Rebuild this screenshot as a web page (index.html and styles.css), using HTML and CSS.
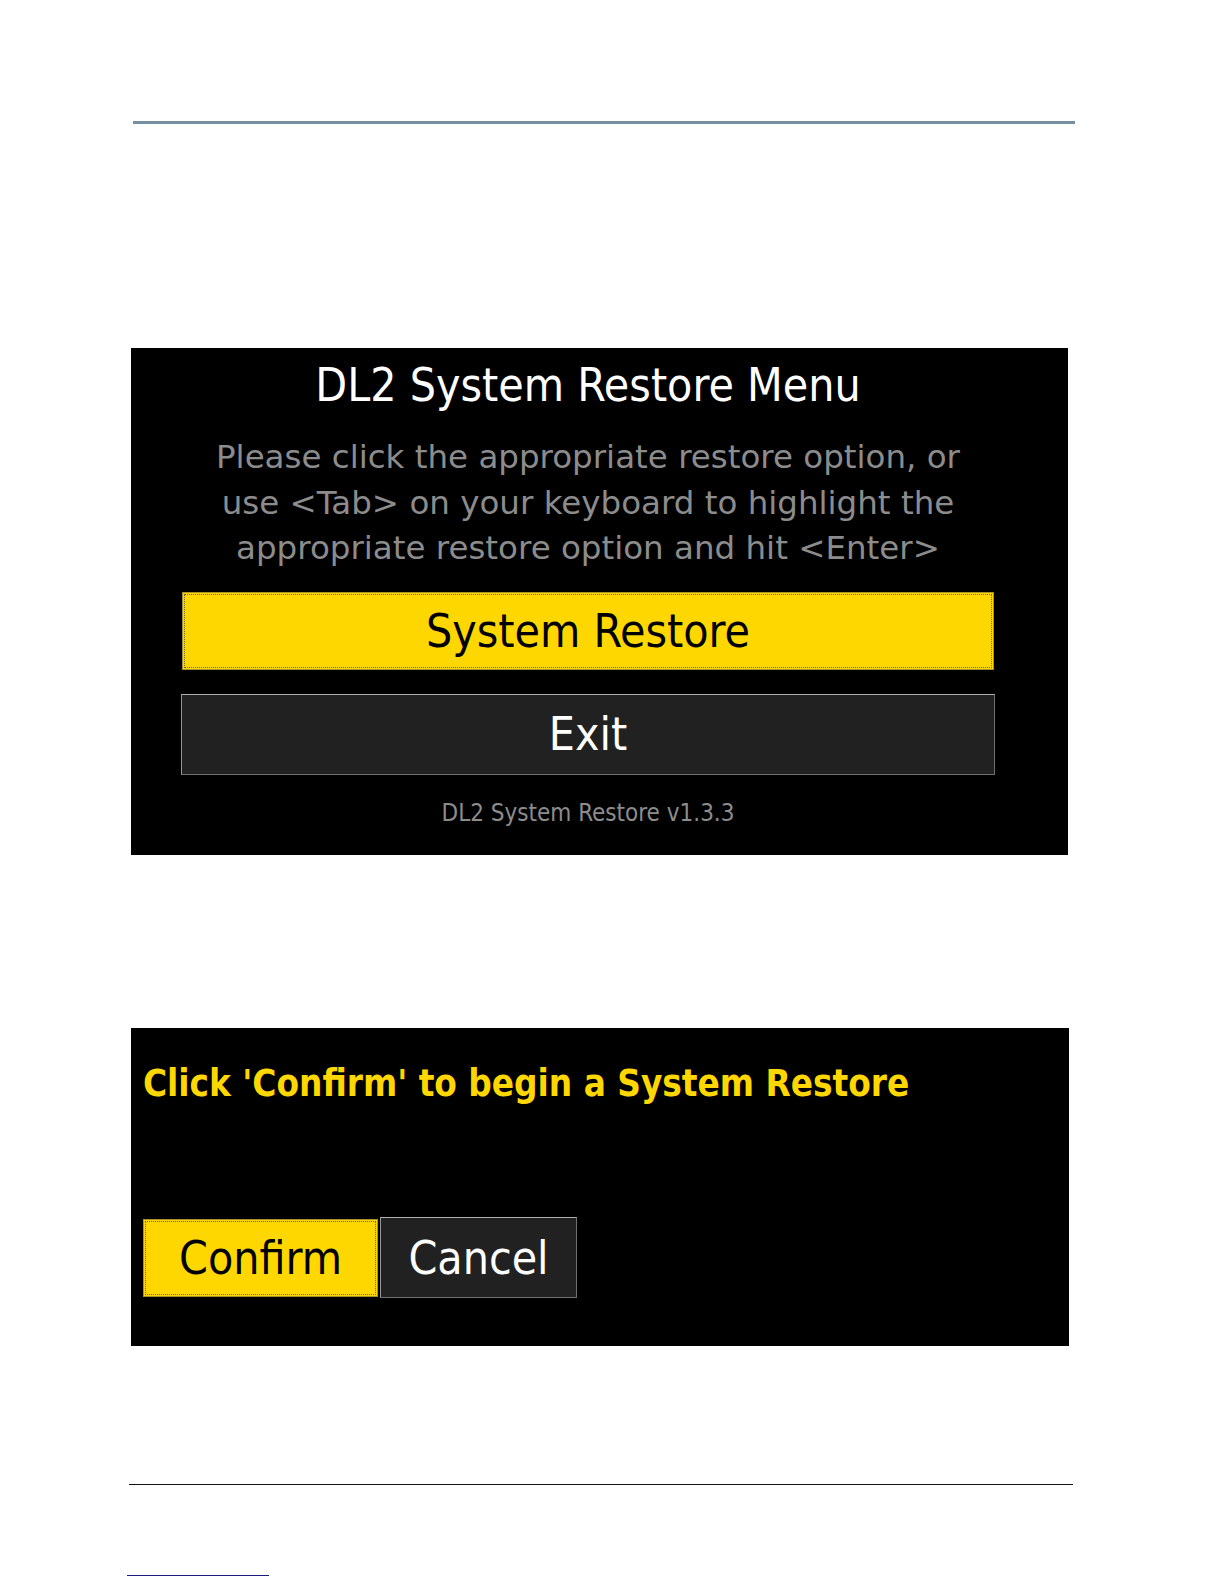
FILE: index.html
```html
<!DOCTYPE html>
<html lang="en">

<head>
    <meta charset="UTF-8">
    <meta name="viewport" content="width=device-width, initial-scale=1.0">
    <title>DL2 System Restore</title>
    <link rel="stylesheet" href="styles.css">
</head>

<body>
    <div class="page">
        <hr class="header-rule">

        <!-- Restore menu screen -->
        <section class="screen menu-screen">
            <h1 class="menu-title">DL2 System Restore Menu</h1>
            <p class="menu-text">
                Please click the appropriate restore option, or<br>
                use &lt;Tab&gt; on your keyboard to highlight the<br>
                appropriate restore option and hit &lt;Enter&gt;
            </p>
            <button class="menu-btn btn-yellow">System Restore</button>
            <button class="menu-btn btn-dark">Exit</button>
            <div class="version">DL2 System Restore v1.3.3</div>
        </section>

        <!-- Confirm screen -->
        <section class="screen confirm-screen">
            <h2 class="confirm-title">Click 'Confirm' to begin a System Restore</h2>
            <div class="confirm-actions">
                <button class="confirm-btn btn-yellow">Confirm</button>
                <button class="cancel-btn btn-dark">Cancel</button>
            </div>
        </section>

        <hr class="footer-rule">
        <div class="footnote-rule"></div>
    </div>
</body>

</html>
```

FILE: styles.css
```css
/* General Reset */
* {
    margin: 0;
    padding: 0;
    box-sizing: border-box;
}

:root {
    --screen-bg: #000;
    --yellow: #fed700;
    --dark-btn: #212121;
    --grey-text: #8c8c8c;
    --rule-color: #7790a0;
}

body {
    background-color: #fff;
    font-family: "DejaVu Sans Condensed", "DejaVu Sans", sans-serif;
    font-stretch: condensed;
}

.page {
    display: flex;
    flex-direction: column;
    padding-left: 129px;
    width: 1075px;
}

.header-rule {
    border: none;
    height: 3px;
    background-color: var(--rule-color);
    margin: 121px 0 0 4px;
    width: 942px;
}

.screen {
    background-color: var(--screen-bg);
    margin-left: 2px;
}

/* Menu screen */
.menu-screen {
    display: flex;
    flex-direction: column;
    margin-top: 224px;
    width: 937px;
    height: 507px;
    padding: 9px 73px 0 50px;
    text-align: center;
}

.menu-title {
    color: #fff;
    font-weight: normal;
    font-size: 46px;
    line-height: 56px;
}

.menu-text {
    color: var(--grey-text);
    font-family: "DejaVu Sans", sans-serif;
    font-stretch: normal;
    font-size: 32.5px;
    line-height: 45.5px;
    margin: 22px -30px 0;
    white-space: nowrap;
}

.menu-btn {
    font-family: inherit;
    font-stretch: condensed;
    font-size: 46px;
    cursor: pointer;
}

.btn-yellow {
    background-color: var(--yellow);
    color: #000;
    border: 1px solid #a8922a;
    outline: 1px dotted #6b6040;
    outline-offset: -3px;
}

.btn-dark {
    background-color: var(--dark-btn);
    color: #fff;
    border: 1px solid;
    border-color: #b0b0b0 #707070 #707070 #959595;
}

.menu-btn.btn-yellow {
    height: 78px;
    margin: 20px 1px 0;
    line-height: 72px;
}

.menu-btn.btn-dark {
    height: 81px;
    margin-top: 24px;
    line-height: 76px;
}

.version {
    color: var(--grey-text);
    font-size: 24px;
    line-height: 30px;
    margin-top: 23px;
}

/* Confirm screen */
.confirm-screen {
    margin-top: 173px;
    width: 938px;
    height: 318px;
    padding: 34px 12px 0;
}

.confirm-title {
    color: var(--yellow);
    font-size: 36.5px;
    font-weight: bold;
    line-height: 44px;
}

.confirm-actions {
    display: flex;
    align-items: center;
    gap: 2px;
    margin-top: 111px;
}

.confirm-actions button {
    font-family: inherit;
    font-stretch: condensed;
    font-size: 46px;
    cursor: pointer;
}

.confirm-btn {
    width: 235px;
    height: 78px;
}

.cancel-btn {
    width: 197px;
    height: 81px;
}

.footer-rule {
    border: none;
    height: 1px;
    background-color: #111;
    margin-top: 138px;
    width: 944px;
}

.footnote-rule {
    height: 1px;
    width: 142px;
    margin: 90px 0 0 -2px;
    background-color: #1a1a80;
}
```
